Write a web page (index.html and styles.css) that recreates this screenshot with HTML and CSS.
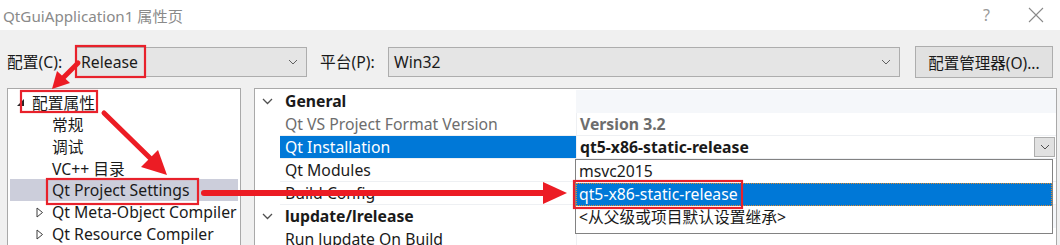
FILE: index.html
```html
<!DOCTYPE html>
<html lang="zh-CN">
<head>
    <meta charset="UTF-8">
    <title>QtGuiApplication1 属性页</title>
    <link rel="stylesheet" href="styles.css">
</head>
<body>
    <div class="window">
        <div class="titlebar">
            <span class="title">QtGuiApplication1 属性页</span>
            <span class="title-buttons">
                <span class="help">?</span>
                <svg class="close" width="16" height="16" viewBox="0 0 16 16"><path d="M1 1L15 15M15 1L1 15" stroke="#8a8a8a" stroke-width="1.1" fill="none"/></svg>
            </span>
        </div>

        <div class="toolbar">
            <span class="label">配置(C):</span>
            <div class="combo combo-config">
                <span>Release</span>
                <svg class="chev" width="10" height="6" viewBox="0 0 10 6"><path d="M1 1L5 5L9 1" stroke="#606060" fill="none"/></svg>
            </div>
            <span class="label label-platform">平台(P):</span>
            <div class="combo combo-platform">
                <span>Win32</span>
                <svg class="chev" width="10" height="6" viewBox="0 0 10 6"><path d="M1 1L5 5L9 1" stroke="#606060" fill="none"/></svg>
            </div>
            <button class="manager">配置管理器(O)...</button>
        </div>

        <div class="panes">
            <div class="tree">
                <div class="node level0">
                    <span class="twisty"><svg width="9" height="9" viewBox="0 0 9 9"><path d="M8 1L8 8L1 8Z" fill="#262626"/></svg></span>
                    <span>配置属性</span>
                </div>
                <div class="node level1"><span class="twisty"></span><span>常规</span></div>
                <div class="node level1"><span class="twisty"></span><span>调试</span></div>
                <div class="node level1"><span class="twisty"></span><span>VC++ 目录</span></div>
                <div class="node level1 selected"><span class="twisty"></span><span>Qt Project Settings</span></div>
                <div class="node level1">
                    <span class="twisty"><svg width="8" height="11" viewBox="0 0 8 11"><path d="M1 1L6.5 5.5L1 10Z" stroke="#3c3c3c" fill="none"/></svg></span>
                    <span>Qt Meta-Object Compiler</span>
                </div>
                <div class="node level1">
                    <span class="twisty"><svg width="8" height="11" viewBox="0 0 8 11"><path d="M1 1L6.5 5.5L1 10Z" stroke="#3c3c3c" fill="none"/></svg></span>
                    <span>Qt Resource Compiler</span>
                </div>
            </div>

            <div class="grid">
                <div class="row header">
                    <span class="gutter"><svg width="11" height="7" viewBox="0 0 11 7"><path d="M1 1L5.5 5.5L10 1" stroke="#505050" stroke-width="1.3" fill="none"/></svg></span>
                    <span class="name">General</span>
                    <span class="value"></span>
                </div>
                <div class="row readonly">
                    <span class="gutter"></span>
                    <span class="name">Qt VS Project Format Version</span>
                    <span class="value bold">Version 3.2</span>
                </div>
                <div class="row active">
                    <span class="gutter"></span>
                    <span class="name">Qt Installation</span>
                    <span class="value bold">
                        <span>qt5-x86-static-release</span>
                        <span class="drop-btn"><svg width="10" height="6" viewBox="0 0 10 6"><path d="M1 1L5 5L9 1" stroke="#505050" fill="none"/></svg></span>
                    </span>
                </div>
                <div class="row">
                    <span class="gutter"></span>
                    <span class="name">Qt Modules</span>
                    <span class="value"></span>
                </div>
                <div class="row">
                    <span class="gutter"></span>
                    <span class="name">Build Config</span>
                    <span class="value"></span>
                </div>
                <div class="row header">
                    <span class="gutter"><svg width="11" height="7" viewBox="0 0 11 7"><path d="M1 1L5.5 5.5L10 1" stroke="#505050" stroke-width="1.3" fill="none"/></svg></span>
                    <span class="name">lupdate/lrelease</span>
                    <span class="value"></span>
                </div>
                <div class="row">
                    <span class="gutter"></span>
                    <span class="name">Run lupdate On Build</span>
                    <span class="value"></span>
                </div>

                <div class="dropdown">
                    <div class="item">msvc2015</div>
                    <div class="item current">qt5-x86-static-release</div>
                    <div class="item">&lt;从父级或项目默认设置继承&gt;</div>
                </div>
            </div>
        </div>

        <!-- red annotations drawn over the dialog -->
        <svg class="marks" width="1060" height="245" viewBox="0 0 1060 245">
            <g fill="none" stroke="#e8212b" stroke-width="2.2">
                <rect x="76" y="46" width="69" height="31"/>
                <rect x="21" y="91" width="76" height="21"/>
                <rect x="47" y="179" width="151" height="25"/>
                <rect x="574" y="181" width="168" height="27"/>
            </g>
            <g stroke="#ec1c24" stroke-width="5" stroke-linecap="round" fill="#ec1c24">
                <line x1="78" y1="63" x2="64" y2="77"/>
                <polygon stroke="none" points="52,89 57,71 70,83"/>
                <line x1="104" y1="113" x2="150" y2="158"/>
                <polygon stroke="none" points="167,175 141,167 158,150"/>
                <line x1="204" y1="193" x2="546" y2="193" stroke-width="6"/>
                <polygon stroke="none" points="567,193 543,182 543,204"/>
            </g>
        </svg>
    </div>
</body>
</html>
```

FILE: styles.css
```css
body {
    margin: 0;
    font-family: "Noto Sans", "Noto Sans CJK SC", sans-serif;
    font-size: 15.75px;
    color: #1a1a1a;
    background-color: #f0f0f0;
}
.window {
    position: relative;
    width: 1060px;
    height: 245px;
    overflow: hidden;
    background-color: #f0f0f0;
}
.titlebar {
    height: 30px;
    background-color: #ffffff;
    display: flex;
    align-items: center;
    justify-content: space-between;
    padding-left: 3px;
    color: #8a8a8a;
    font-size: 15.2px;
}
.title-buttons {
    display: flex;
    align-items: center;
}
.help {
    font-size: 16px;
    color: #9a9a9a;
    margin-right: 38px;
}
.close {
    margin-right: 16px;
}

.toolbar {
    display: flex;
    align-items: flex-start;
    height: 58px;
    box-sizing: border-box;
    padding: 17px 0 0 7px;
}
.label {
    width: 68px;
    height: 30px;
    line-height: 30px;
}
.label-platform {
    margin-left: 13px;
}
.combo {
    height: 30px;
    box-sizing: border-box;
    border: 1px solid #adadad;
    background-color: #e5e5e5;
    display: flex;
    align-items: center;
    justify-content: space-between;
    padding: 0 8px 0 5px;
}
.combo-config {
    width: 232px;
}
.combo-platform {
    width: 512px;
}
.manager {
    margin: -1px 0 0 15px;
    width: 138px;
    height: 32px;
    border: 1px solid #adadad;
    background-color: #e1e1e1;
    font-family: "Noto Sans", "Noto Sans CJK SC", sans-serif;
    font-size: 15.5px;
    color: #1a1a1a;
    padding: 0;
}

.panes {
    display: flex;
    gap: 13px;
    padding-left: 7px;
}
.tree {
    width: 234px;
    height: 200px;
    box-sizing: border-box;
    border: 1px solid #a9a9a9;
    background-color: #ffffff;
    padding-top: 2px;
    overflow: hidden;
}
.node {
    display: flex;
    align-items: center;
    height: 22px;
    white-space: nowrap;
}
.twisty {
    width: 16px;
    flex: none;
    display: flex;
    align-items: center;
}
.level0 {
    padding-left: 8px;
}
.level1 {
    padding-left: 28px;
}
.node.selected {
    background-color: #cccedb;
    margin: 0 2px;
    padding-left: 26px;
}

.grid {
    position: relative;
    width: 803px;
    height: 200px;
    box-sizing: border-box;
    border: 1px solid #a9a9a9;
    background-color: #ffffff;
    padding-top: 1px;
}
.row {
    display: grid;
    grid-template-columns: 25px 296px 1fr;
    height: 23px;
}
.gutter {
    display: flex;
    align-items: center;
    padding-left: 7px;
}
.name {
    padding-left: 5px;
    line-height: 22px;
    border-bottom: 1px solid #eef0f3;
    white-space: nowrap;
}
.value {
    padding-left: 3px;
    line-height: 22px;
    border-bottom: 1px solid #eef0f3;
    border-left: 1px solid #eef0f3;
    display: flex;
    align-items: center;
    justify-content: space-between;
}
.bold {
    font-weight: bold;
}
.header .name {
    font-weight: bold;
    border-bottom: none;
}
.header .value {
    background-color: #f5f7fa;
    border-left: none;
    border-bottom: none;
}
.readonly .name,
.readonly .value {
    color: #6d6d6d;
}
.active .name {
    background-color: #0078d7;
    color: #ffffff;
}
.drop-btn {
    width: 21px;
    height: 20px;
    box-sizing: border-box;
    border: 1px solid #adadad;
    background-color: #e1e1e1;
    display: flex;
    align-items: center;
    justify-content: center;
    margin-right: 1px;
}

.dropdown {
    position: absolute;
    left: 320px;
    top: 70px;
    width: 478px;
    height: 75px;
    box-sizing: border-box;
    border: 1px solid #828282;
    background-color: #ffffff;
}
.item {
    height: 23px;
    line-height: 23px;
    padding-left: 3px;
    box-sizing: border-box;
}
.item.current {
    background-color: #0078d7;
    color: #ffffff;
    border: 1px dotted #e08a2c;
    line-height: 21px;
    padding-left: 2px;
}

.marks {
    position: absolute;
    top: 0;
    left: 0;
    pointer-events: none;
}
```
